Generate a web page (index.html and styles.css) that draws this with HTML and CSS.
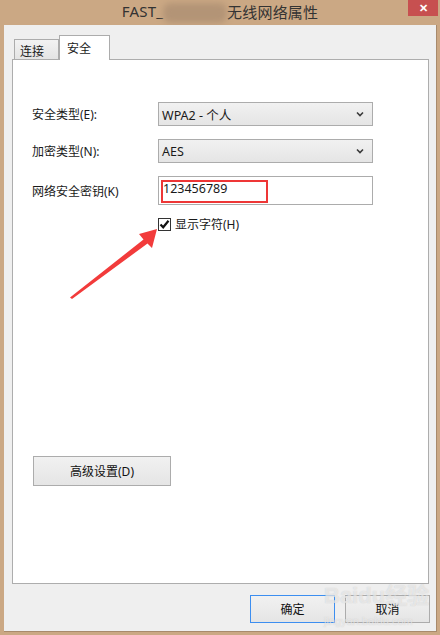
FILE: index.html
```html
<!DOCTYPE html>
<html lang="zh-CN">
<head>
    <meta charset="utf-8">
    <title>无线网络属性</title>
    <link rel="stylesheet" href="styles.css">
</head>
<body>
    <div class="window">
        <div class="titlebar">
            <span class="title">FAST_<span class="blur-block"></span>无线网络属性</span>
            <div class="close-btn">&#x2715;</div>
        </div>

        <div class="client">
            <div class="tabs">
                <div class="tab">连接</div>
                <div class="tab active">安全</div>
            </div>

            <div class="panel">
                <div class="form-grid">
                    <label class="label">安全类型(E):</label>
                    <div class="select">
                        <span>WPA2 - 个人</span>
                        <svg class="chevron" width="8" height="6" viewBox="0 0 8 6"><path d="M1 1.5 L4 4.5 L7 1.5" fill="none" stroke="#3a3a3a" stroke-width="1.6"/></svg>
                    </div>

                    <label class="label">加密类型(N):</label>
                    <div class="select">
                        <span>AES</span>
                        <svg class="chevron" width="8" height="6" viewBox="0 0 8 6"><path d="M1 1.5 L4 4.5 L7 1.5" fill="none" stroke="#3a3a3a" stroke-width="1.6"/></svg>
                    </div>

                    <label class="label">网络安全密钥(K)</label>
                    <div class="text-input">
                        <span class="key-mark">123456789</span>
                    </div>

                    <span></span>
                    <div class="check-row">
                        <span class="checkbox">
                            <svg width="11" height="11" viewBox="0 0 11 11"><path d="M1.5 5.5 L4.2 8.3 L9.5 1.8" fill="none" stroke="#111" stroke-width="2.2"/></svg>
                        </span>
                        <span>显示字符(H)</span>
                    </div>
                </div>

                <button class="btn advanced">高级设置(D)</button>
            </div>

            <div class="footer">
                <button class="btn primary">确定</button>
                <button class="btn">取消</button>
            </div>

            <div class="watermark">Bai<span class="paw">du</span>经验<br><small>jingyan.baidu.com</small></div>
        </div>

        <!-- annotation arrow -->
        <svg class="arrow" width="440" height="635" viewBox="0 0 440 635">
            <polygon points="157,229 152,248 147.5,243.5 72,299 70,297.5 143.5,239.5 139,234" fill="#f23b3b"/>
        </svg>
    </div>
</body>
</html>
```

FILE: styles.css
```css
body {
    margin: 0;
    font-family: "Noto Sans", "Noto Sans CJK SC", sans-serif;
    font-size: 12px;
    color: #1a1a1a;
}
.window {
    position: relative;
    width: 440px;
    height: 635px;
    background-color: #cba884;
    box-sizing: border-box;
    overflow: hidden;
}
.titlebar {
    position: relative;
    height: 25px;
    display: flex;
    justify-content: center;
}
.title {
    display: flex;
    align-items: center;
    height: 22px;
    font-size: 15px;
    color: #333;
    letter-spacing: 0.2px;
}
.blur-block {
    display: inline-block;
    width: 64px;
    height: 20px;
    margin-top: 4px;
    background-color: #b39476;
    filter: blur(3px);
    border-radius: 8px;
}
.close-btn {
    position: absolute;
    top: 0;
    right: 2px;
    width: 30px;
    height: 16px;
    background-color: #c75050;
    color: #fff;
    font-size: 11px;
    font-weight: bold;
    line-height: 16px;
    text-align: center;
}
.client {
    position: relative;
    margin: 0 3px 0 4px;
    height: 607px;
    background-color: #efefef;
    border-right: 1px solid #a88a6c;
    border-bottom: 1px solid #a88a6c;
    padding: 10px 0 0 8px;
    box-sizing: border-box;
}
.tabs {
    display: flex;
    align-items: flex-end;
    height: 24px;
    padding-left: 2px;
}
.tab {
    height: 20px;
    width: 45px;
    box-sizing: border-box;
    border: 1px solid #acacac;
    border-bottom: none;
    background: linear-gradient(#f2f2f2, #e4e4e4);
    padding: 2px 0 0 5px;
    font-size: 12px;
}
.tab.active {
    width: 51px;
    height: 25px;
    margin-bottom: -1px;
    background: #fff;
    padding: 3px 0 0 7px;
    position: relative;
}
.panel {
    width: 417px;
    height: 525px;
    box-sizing: border-box;
    background-color: #fff;
    border: 1px solid #adadad;
    padding: 42px 0 0 19px;
}
.form-grid {
    display: grid;
    grid-template-columns: 126px 215px;
    grid-template-rows: 24px 24px 29px 13px;
    row-gap: 13px;
    align-items: center;
}
.form-grid > :nth-child(n+7) {
    margin-top: -1px;
}
.form-grid > :nth-child(n+9) {
    margin-top: 3px;
}
.label {
    font-size: 12px;
}
.select {
    height: 24px;
    box-sizing: border-box;
    border: 1px solid #acacac;
    background: linear-gradient(#f1f1f1, #e5e5e5);
    display: flex;
    align-items: center;
    justify-content: space-between;
    padding: 0 8px 0 3px;
    font-size: 12.5px;
}
.text-input {
    height: 29px;
    box-sizing: border-box;
    border: 1px solid #acacac;
    background: #fff;
    padding: 3px 0 0 2px;
}
.key-mark {
    display: block;
    width: 107px;
    height: 23px;
    box-sizing: border-box;
    border: 2.5px solid #ee3636;
    font-size: 12.5px;
    line-height: 13px;
    padding-left: 0;
}
.check-row {
    display: flex;
    align-items: center;
    gap: 4px;
    font-size: 12px;
}
.checkbox {
    width: 13px;
    height: 13px;
    box-sizing: border-box;
    border: 1px solid #333;
    background: #fff;
    display: flex;
    align-items: center;
    justify-content: center;
}
.btn {
    font-family: "Noto Sans", "Noto Sans CJK SC", sans-serif;
    font-size: 12px;
    color: #111;
    width: 85px;
    height: 28px;
    border: 1px solid #acacac;
    background: linear-gradient(#f1f1f1, #e5e5e5);
    padding: 0;
}
.btn.advanced {
    display: block;
    width: 138px;
    height: 30px;
    margin: 225px 0 0 1px;
}
.btn.primary {
    border-color: #3c8ef0;
}
.footer {
    display: flex;
    gap: 10px;
    padding: 11px 0 0 238px;
}
.watermark {
    position: absolute;
    left: 320px;
    top: 560px;
    color: rgba(255, 255, 255, 0.55);
    font-family: "Liberation Sans", "Noto Sans CJK SC", sans-serif;
    font-size: 22px;
    font-weight: bold;
    line-height: 22px;
    text-shadow: 0 0 1px rgba(160, 160, 160, 0.5);
}
.watermark small {
    font-size: 11px;
    font-weight: normal;
}
.arrow {
    position: absolute;
    left: 0;
    top: 0;
    pointer-events: none;
}
```
